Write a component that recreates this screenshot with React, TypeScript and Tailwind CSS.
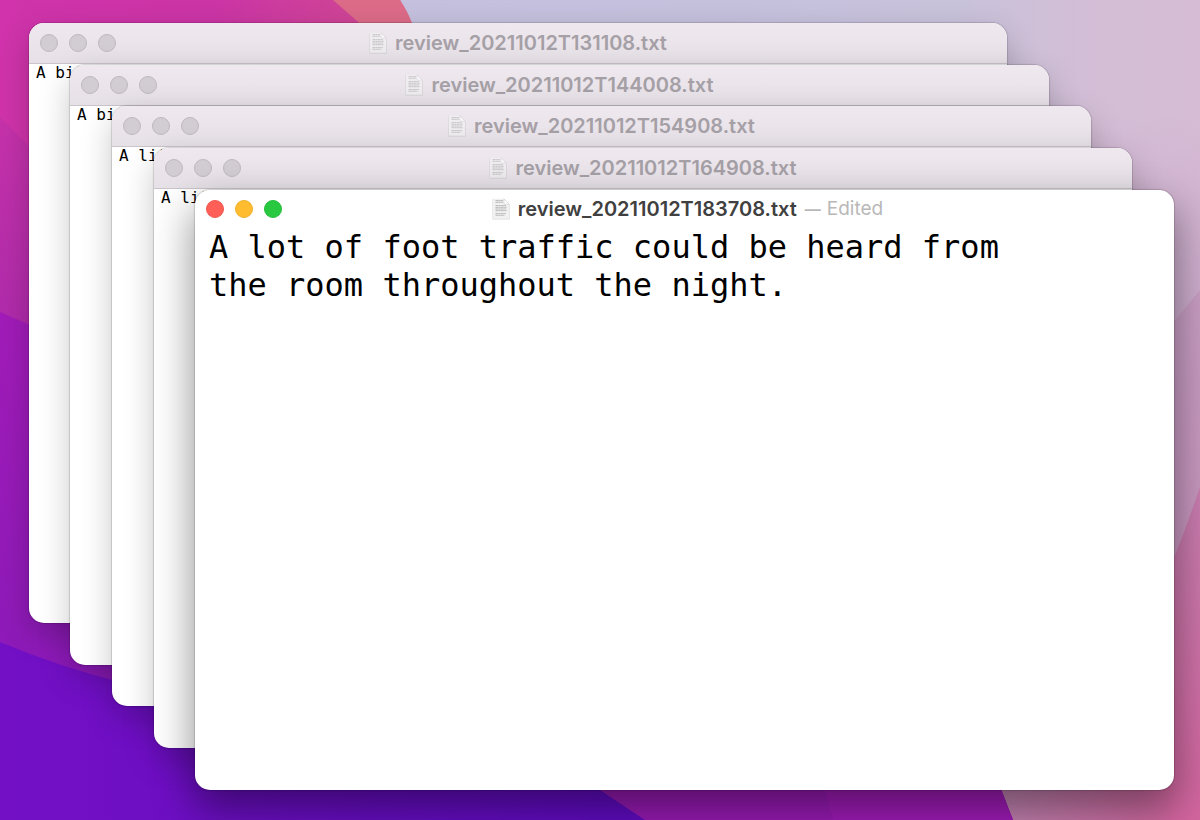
import clsx from "clsx";

type Note = {
  stamp: string;
  text: string;
  active?: boolean;
  place: string;
};

const notes: Note[] = [
  { stamp: "20211012T131108", text: "A bit", place: "left-[29px] right-[193px] top-[23px] bottom-[197px]" },
  { stamp: "20211012T144008", text: "A bit", place: "left-[70px] right-[151px] top-[65px] bottom-[155px]" },
  { stamp: "20211012T154908", text: "A lit", place: "left-[112px] right-[109px] top-[106px] bottom-[114px]" },
  { stamp: "20211012T164908", text: "A lit", place: "left-[154px] right-[68px] top-[148px] bottom-[72px]" },
  {
    stamp: "20211012T183708",
    text: "A lot of foot traffic could be heard from\nthe room throughout the night.",
    active: true,
    place: "left-[195px] right-[26px] top-[190px] bottom-[30px]",
  },
];

function Wallpaper() {
  return (
    <svg
      className="absolute inset-0 size-full"
      viewBox="0 0 1200 820"
      preserveAspectRatio="none"
      aria-hidden="true"
    >
      <defs>
        <linearGradient id="magenta" x1="0" y1="0" x2="400" y2="0" gradientUnits="userSpaceOnUse">
          <stop offset="0" stopColor="#d033ab" />
          <stop offset="0.55" stopColor="#cb35a5" />
          <stop offset="0.9" stopColor="#cf4595" />
        </linearGradient>
        <linearGradient id="lilac" x1="0" y1="0" x2="1" y2="0">
          <stop offset="0" stopColor="#c3bfdf" />
          <stop offset="0.62" stopColor="#c5c1dd" />
          <stop offset="0.8" stopColor="#c9c2db" />
          <stop offset="0.9" stopColor="#d2bed6" />
          <stop offset="1" stopColor="#d6bdd5" />
        </linearGradient>
        <linearGradient id="mauve" x1="0" y1="0" x2="0" y2="1">
          <stop offset="0" stopColor="#cfa8cd" stopOpacity="0" />
          <stop offset="0.3" stopColor="#cbabcc" />
          <stop offset="1" stopColor="#c688b4" />
        </linearGradient>
        <linearGradient id="rose" x1="0" y1="487" x2="0" y2="820" gradientUnits="userSpaceOnUse">
          <stop offset="0" stopColor="#c87eb0" />
          <stop offset="1" stopColor="#d3659f" />
        </linearGradient>
        <linearGradient id="corner" x1="1000" y1="0" x2="1170" y2="0" gradientUnits="userSpaceOnUse">
          <stop offset="0" stopColor="#c184b1" />
          <stop offset="1" stopColor="#d0669f" />
        </linearGradient>
        <linearGradient id="plum" x1="0" y1="117" x2="0" y2="320" gradientUnits="userSpaceOnUse">
          <stop offset="0" stopColor="#c632aa" />
          <stop offset="1" stopColor="#b02bab" />
        </linearGradient>
        <linearGradient id="violet" x1="0" y1="312" x2="0" y2="680" gradientUnits="userSpaceOnUse">
          <stop offset="0" stopColor="#a21cb9" />
          <stop offset="1" stopColor="#8c1ab9" />
        </linearGradient>
        <linearGradient id="indigo" x1="0" y1="0" x2="600" y2="0" gradientUnits="userSpaceOnUse">
          <stop offset="0" stopColor="#7310c5" />
          <stop offset="1" stopColor="#600bc2" />
        </linearGradient>
      </defs>
      <rect width="1200" height="820" fill="url(#lilac)" />
      <path d="M1000 110H1200V820H1000Z" fill="url(#mauve)" />
      <path d="M1200 290L1150 350V560H1200Z" fill="#c68fbb" opacity="0.45" />
      <path d="M1200 487C1185 530 1165 590 1130 640L990 760L1010 820H1200Z" fill="url(#rose)" />
      <path d="M980 760L1013 820H1170V760Z" fill="url(#corner)" />
      <path d="M0 0H400C440 90 700 500 1001 790L1013 820H0Z" fill="url(#magenta)" />
      <path d="M333 0H400Q408 12 412 23L460 110Q390 50 333 0Z" fill="#dc6b88" />
      <path d="M0 117Q120 240 300 390L1001 790L1013 820H0Z" fill="url(#plum)" />
      <path d="M0 312Q180 390 400 500L990 760L1013 820H0Z" fill="url(#violet)" />
      <path d="M400 640L824 790L833 820H560Z" fill="#981ab4" />
      <path d="M820 775H995L1013 820H833Z" fill="#a01bb8" />
      <path d="M0 642Q60 667 120 682Q400 700 600 790L645 820H0Z" fill="url(#indigo)" />
    </svg>
  );
}

function DocumentIcon({ faded }: { faded: boolean }) {
  return (
    <svg className={clsx("h-[22px] w-[18px] shrink-0", faded && "opacity-70")} viewBox="0 0 18 22" aria-hidden="true">
      <path d="M.4 1H12.4L17.8 6.6V21.4H.4Z" fill="#000" opacity="0.14" />
      <path d="M.8 .8H12L17.2 6.2V20.8H.8Z" fill="#f1f1f1" />
      <path d="M12 .8V5.4Q12 6.2 12.8 6.2H17.2Z" fill="#fff" stroke="#c2c2c2" strokeWidth=".5" />
      <path
        d="M3.5 2.6H11M3.5 4.3H10.8M3.5 7.6H14M3.5 9.3H14.6M3.5 11H14.2M3.5 12.7H14.6M3.5 15.6H14M3.5 17.3H12.4"
        stroke="#a4a4a4"
        strokeWidth=".75"
        strokeDasharray="2.6 .3 1.6 .3"
      />
    </svg>
  );
}

function NoteWindow({ stamp, text, active = false, place }: Note) {
  const light = "size-[18px] rounded-full border";
  const idle = "border-[#beb8bf] bg-[#d2ccd3]";
  const name = `review_${stamp}.txt`;

  return (
    <section
      className={clsx(
        "absolute flex flex-col overflow-hidden rounded-[15px] bg-white",
        place,
        active
          ? "shadow-[0_0_1px_1px_rgba(0,0,0,0.14),0_18px_40px_2px_rgba(0,0,0,0.42)]"
          : "shadow-[0_0_1px_1px_rgba(0,0,0,0.14),0_12px_32px_rgba(0,0,0,0.22)]",
      )}
    >
      <header
        className={clsx(
          "relative flex shrink-0 items-center justify-center",
          active ? "h-[38px] pl-1.5" : "h-[41px] border-b border-[#cbc5cb] bg-linear-to-b from-[#efe8ef] to-[#e6e0e7]",
        )}
      >
        <div className="absolute left-[11px] flex gap-[11px]">
          <button type="button" aria-label="Close" className={clsx(light, active ? "border-[#ee5951] bg-[#ff5f57]" : idle)} />
          <button type="button" aria-label="Minimize" className={clsx(light, active ? "border-[#eeb02e] bg-[#febc2e]" : idle)} />
          <button type="button" aria-label="Zoom" className={clsx(light, active ? "border-[#25be3d] bg-[#28c840]" : idle)} />
        </div>
        <div className="flex items-center gap-2 font-['Inter',sans-serif] text-[20px] leading-6">
          <DocumentIcon faded={!active} />
          <h2 className={clsx("font-semibold", active ? "text-[#404040]" : "text-[#a5a0a6]")}>{name}</h2>
          {active && (
            <p className="flex items-center gap-1.5 text-[19px] text-[#b8b8b8]">
              <span className="text-[16px] font-semibold">—</span>
              <span>Edited</span>
            </p>
          )}
        </div>
      </header>
      <textarea
        aria-label={name}
        defaultValue={text}
        spellCheck={false}
        className={clsx(
          "block w-full grow resize-none bg-transparent font-['DejaVu_Sans_Mono',monospace] text-black outline-none",
          active ? "px-[14px] text-[32px] leading-[38px]" : "px-[7px] text-[16px] leading-[18px]",
        )}
      />
    </section>
  );
}

export default function App() {
  return (
    <main className="relative h-screen overflow-hidden">
      <Wallpaper />
      {notes.map((note) => (
        <NoteWindow key={note.stamp} {...note} />
      ))}
    </main>
  );
}
